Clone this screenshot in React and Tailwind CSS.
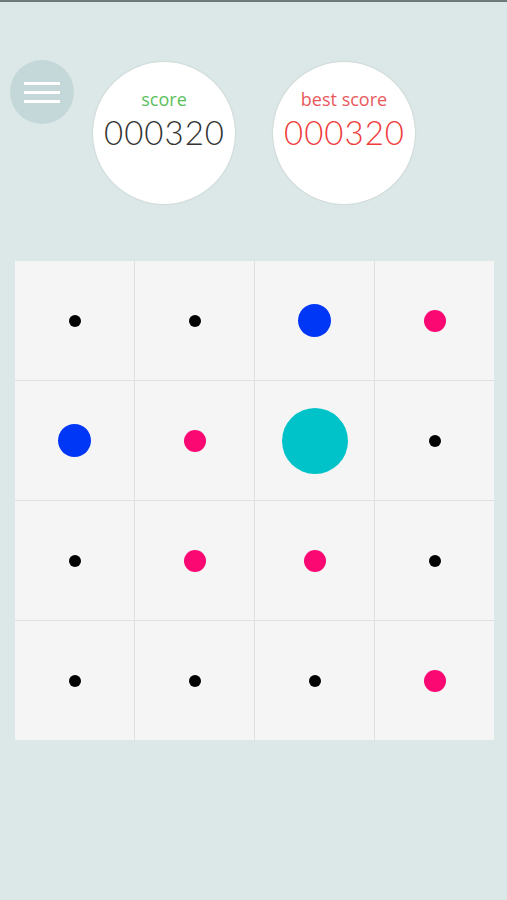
const CELLS = [
  ["dot", "dot", "blue", "pink"],
  ["blue", "pink", "teal", "dot"],
  ["dot", "pink", "pink", "dot"],
  ["dot", "dot", "dot", "pink"],
];

function Piece({ kind }) {
  if (kind === "blue") return <div className="h-[33px] w-[33px] rounded-full bg-[#0037f7]" />;
  if (kind === "pink") return <div className="h-[22px] w-[22px] rounded-full bg-[#fb0873]" />;
  if (kind === "teal") return <div className="h-[66px] w-[66px] rounded-full bg-[#00c3c9]" />;
  return <div className="h-[12px] w-[12px] rounded-full bg-black" />;
}

function ScoreBubble({ label, value, labelColor, valueColor }) {
  return (
    <div className="flex h-[142px] w-[142px] flex-col items-center rounded-full bg-white pt-[27px] shadow-[0_0_2px_rgba(0,0,0,0.18)]">
      <span className={`text-[18px] leading-[20px] ${labelColor}`}>{label}</span>
      <span
        className={`mt-[6px] pl-[1px] font-['Lato',sans-serif] text-[33px] font-light leading-[34px] tracking-[1px] ${valueColor}`}
      >
        {value}
      </span>
    </div>
  );
}

export default function App() {
  return (
    <div className="min-h-[900px] w-full bg-[#dce8e7] font-['Open_Sans',sans-serif]">
      <div className="h-[2px] bg-[#6e7876]" />

      <div className="flex items-start pl-[10px] pt-[58px]">
        <button className="flex h-[64px] w-[64px] flex-col items-center justify-center gap-[6px] rounded-full bg-[#c5d8d9]">
          <span className="h-[3px] w-[36px] bg-white" />
          <span className="h-[3px] w-[36px] bg-white" />
          <span className="h-[3px] w-[36px] bg-white" />
        </button>

        <div className="ml-[19px] mt-[2px] flex gap-[38px]">
          <ScoreBubble
            label="score"
            value="000320"
            labelColor="text-[#5cbf5c]"
            valueColor="text-[#333333]"
          />
          <ScoreBubble
            label="best score"
            value="000320"
            labelColor="text-[#e8585b]"
            valueColor="text-[#f03c3c]"
          />
        </div>
      </div>

      <div className="ml-[15px] mt-[57px] grid w-[479px] grid-cols-4 gap-px bg-[#dfe1e1]">
        {CELLS.flat().map((kind, i) => (
          <div key={i} className="flex h-[119px] items-center justify-center bg-[#f5f5f5]">
            <Piece kind={kind} />
          </div>
        ))}
      </div>
    </div>
  );
}
